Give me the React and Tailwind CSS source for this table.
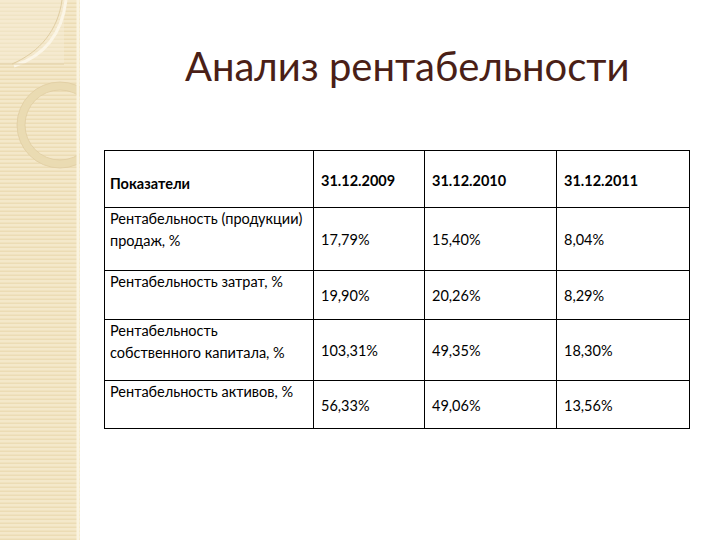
import React from 'react';

const rows = [
  { label: ['Рентабельность (продукции)', 'продаж, %'], values: ['17,79%', '15,40%', '8,04%'], h: 'h-[63px]' },
  { label: ['Рентабельность затрат, %'], values: ['19,90%', '20,26%', '8,29%'], h: 'h-[49px]' },
  { label: ['Рентабельность', 'собственного капитала, %'], values: ['103,31%', '49,35%', '18,30%'], h: 'h-[61px]' },
  { label: ['Рентабельность активов, %'], values: ['56,33%', '49,06%', '13,56%'], h: 'h-[48px]' },
];

const cell = 'border border-black align-middle pl-[7px] pr-1';

function SideStrip() {
  return (
    <div className="w-[80px] h-full shrink-0 overflow-hidden">
      <svg width="80" height="540" viewBox="0 0 80 540">
        <defs>
          <pattern id="stripes" width="80" height="4" patternUnits="userSpaceOnUse">
            <rect width="80" height="4" fill="#f4e8ca" />
            <rect width="80" height="1.5" y="2.5" fill="#ecdcb4" />
          </pattern>
        </defs>
        <rect width="80" height="540" fill="url(#stripes)" />
        <rect x="0" y="0" width="64" height="64" fill="#f7eed8" opacity="0.45" />
        <path d="M62 0 C58 30 40 52 12 64" stroke="#e0cda2" strokeWidth="1" fill="none" />
        <path d="M66 0 C62 34 44 56 14 66" stroke="#fbf5e6" strokeWidth="3" fill="none" />
        <line x1="0" y1="64" x2="64" y2="64" stroke="#e0cda2" strokeWidth="1" />
        <circle cx="60" cy="125" r="39" stroke="#eadbb2" strokeWidth="8" fill="none" />
        <circle cx="60" cy="125" r="43" stroke="#e0cda2" strokeWidth="0.8" fill="none" />
        <circle cx="60" cy="125" r="35" stroke="#e0cda2" strokeWidth="0.8" fill="none" />
        <line x1="78" y1="0" x2="78" y2="540" stroke="#faf3e0" strokeWidth="3" />
      </svg>
    </div>
  );
}

export default function App() {
  return (
    <div className="w-[720px] h-[540px] flex bg-white overflow-hidden" style={{ fontFamily: 'Lato, "Open Sans", sans-serif' }}>
      <SideStrip />
      <div className="flex-1 pl-[24px]">
        <h1 className="h-[150px] pt-[41px] pl-[81px] text-[40px] leading-[50px] text-[#4a1f17]">
          Анализ рентабельности
        </h1>
        <table className="border-collapse text-[14.5px] text-black">
          <colgroup>
            <col className="w-[209px]" />
            <col className="w-[111px]" />
            <col className="w-[132px]" />
            <col className="w-[133px]" />
          </colgroup>
          <tbody>
            <tr className="h-[57px]">
              <td className="border border-black align-bottom pl-[5px] pb-[12px] font-bold">Показатели</td>
              <td className={`${cell} font-bold pt-[3px]`}>31.12.2009</td>
              <td className={`${cell} font-bold pt-[3px]`}>31.12.2010</td>
              <td className={`${cell} font-bold pt-[3px]`}>31.12.2011</td>
            </tr>
            {rows.map((r) => (
              <tr key={r.label[0] + r.label.length} className={r.h}>
                <td className="border border-black align-top pl-[5px] pt-0 leading-[22px]">
                  {r.label.map((l) => (
                    <div key={l}>{l}</div>
                  ))}
                </td>
                {r.values.map((v, i) => (
                  <td key={i} className={`${cell} pt-[2px]`}>
                    {v}
                  </td>
                ))}
              </tr>
            ))}
          </tbody>
        </table>
      </div>
    </div>
  );
}
